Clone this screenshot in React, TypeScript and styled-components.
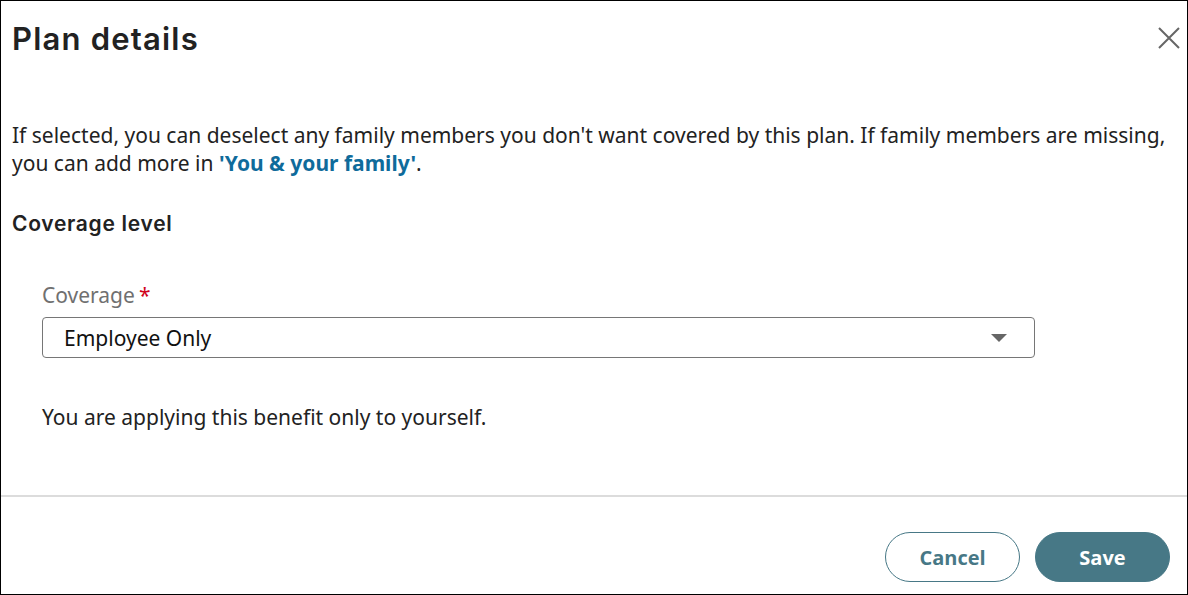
import React from 'react';
import styled, { createGlobalStyle } from 'styled-components';

const GlobalStyle = createGlobalStyle`
  html, body {
    margin: 0;
    padding: 0;
    background: #fff;
  }
  * {
    box-sizing: border-box;
  }
`;

const TEAL = '#477886';

export default function App() {
  return (
    <>
      <GlobalStyle />
      <Dialog>
        <Header>
          <Title children="Plan details" />
          <CloseButton aria-label="Close">
            <svg width="22" height="22" viewBox="0 0 22 22">
              <path d="M1 1 L21 21 M21 1 L1 21" stroke="#666" strokeWidth="2" fill="none" />
            </svg>
          </CloseButton>
        </Header>

        <Body>
          <Intro>
            If selected, you can deselect any family members you don't want covered by this plan. If family members are missing,
            <br />
            you can add more in <Link href="#">'You &amp; your family'</Link>.
          </Intro>

          <SectionTitle children="Coverage level" />

          <Field>
            <Label>
              Coverage<Required>*</Required>
            </Label>
            <Select>
              <SelectValue children="Employee Only" />
              <Caret />
            </Select>
            <Hint children="You are applying this benefit only to yourself." />
          </Field>
        </Body>

        <Footer>
          <Button variant="outline" children="Cancel" />
          <Button variant="solid" children="Save" />
        </Footer>
      </Dialog>
    </>
  );
}

const Dialog = styled.div`
  width: 1188px;
  height: 595px;
  border: 1px solid #000;
  display: flex;
  flex-direction: column;
  background: #fff;
  font-family: 'Noto Sans', 'Open Sans', sans-serif;
  color: #222;
`;

const Header = styled.div`
  display: flex;
  justify-content: space-between;
  align-items: flex-start;
  padding: 18px 7px 0 11px;
  height: 78px;
`;

const Title = styled.h1`
  margin: 0;
  font-family: 'Inter', sans-serif;
  font-weight: 600;
  font-size: 31px;
  line-height: 40px;
  letter-spacing: 1.2px;
  color: #222;
`;

const CloseButton = styled.button`
  border: none;
  background: none;
  padding: 0;
  margin-top: 8px;
  width: 22px;
  height: 22px;
  cursor: pointer;
  display: flex;
`;

const Body = styled.div`
  flex: 1;
  padding: 42px 11px 0;
  border-bottom: 2px solid #dcdcdc;
`;

const Intro = styled.p`
  margin: 0;
  font-size: 21px;
  line-height: 28px;
  color: #222;
  white-space: nowrap;
`;

const Link = styled.a`
  color: #0f6b9b;
  font-weight: 700;
  text-decoration: none;
`;

const SectionTitle = styled.h2`
  margin: 34px 0 0;
  font-family: 'Inter', sans-serif;
  font-weight: 600;
  font-size: 21px;
  line-height: 26px;
  letter-spacing: 0.7px;
  color: #222;
`;

const Field = styled.div`
  padding: 44px 0 0 30px;
  width: 1023px;
`;

const Label = styled.div`
  font-size: 21px;
  line-height: 28px;
  color: #707070;
  display: flex;
  gap: 4px;
`;

const Required = styled.span`
  color: #d0021b;
`;

const Select = styled.div`
  margin-top: 8px;
  height: 41px;
  border: 1px solid #767676;
  border-radius: 4px;
  display: flex;
  align-items: center;
  justify-content: space-between;
  padding: 0 27px 0 21px;
`;

const SelectValue = styled.span`
  font-size: 21px;
  color: #111;
`;

const Caret = styled.span`
  width: 0;
  height: 0;
  border-left: 8px solid transparent;
  border-right: 8px solid transparent;
  border-top: 8px solid #666;
`;

const Hint = styled.p`
  margin: 45px 0 0;
  font-size: 21px;
  line-height: 28px;
  color: #222;
`;

const Footer = styled.div`
  height: 97px;
  display: flex;
  justify-content: flex-end;
  align-items: flex-start;
  gap: 15px;
  padding: 35px 17px 0 0;
`;

const Button = styled.button<{ variant: 'outline' | 'solid' }>`
  width: 135px;
  height: 50px;
  border-radius: 25px;
  font-family: 'Open Sans', 'Noto Sans', sans-serif;
  font-weight: 700;
  font-size: 20px;
  cursor: pointer;
  border: 1px solid ${TEAL};
  background: ${({ variant }) => (variant === 'solid' ? TEAL : '#fff')};
  color: ${({ variant }) => (variant === 'solid' ? '#fff' : TEAL)};
`;
